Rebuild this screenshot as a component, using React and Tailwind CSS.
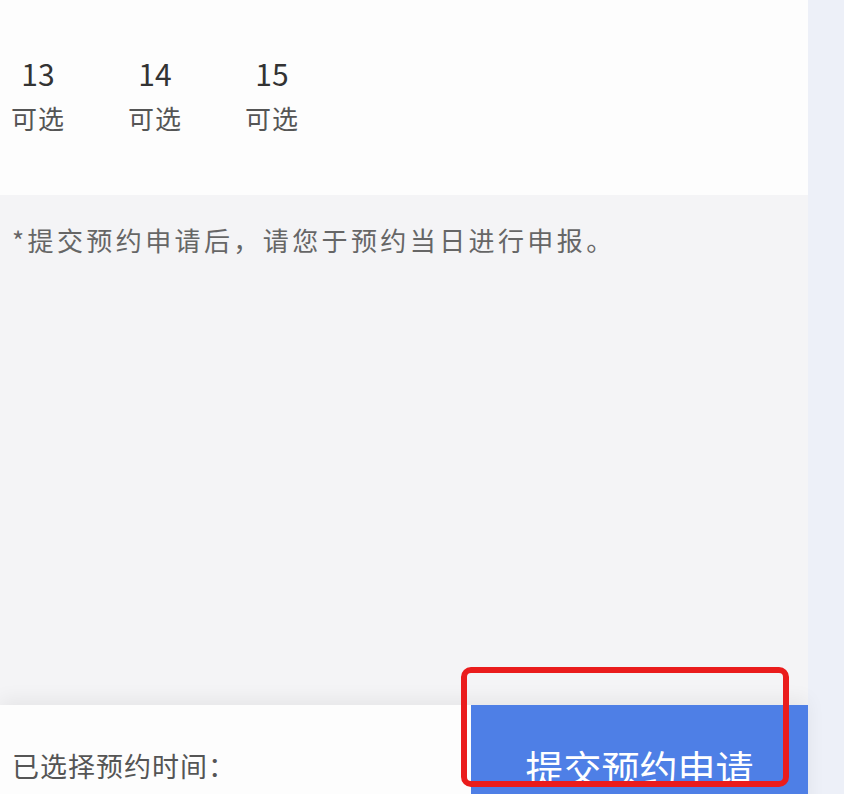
import React from "react";

const days = [
	{ day: "13", status: "可选" },
	{ day: "14", status: "可选" },
	{ day: "15", status: "可选" },
];

function App() {
	return (
		<div
			className="relative flex h-[794px] w-[844px] overflow-hidden bg-[#edf0f8]"
			style={{ fontFamily: '"Noto Sans CJK SC", "Noto Sans", sans-serif' }}
		>
			<div className="flex w-[808px] flex-col">
				{/* date picker row */}
				<div className="flex h-[195px] shrink-0 gap-[63px] bg-[#fdfdfd] pl-[11px] pt-[55px]">
					{days.map((d) => (
						<div key={d.day} className="flex w-[54px] flex-col items-center">
							<span className="text-[30px] leading-[36px] text-[#333]">
								{d.day}
							</span>
							<span className="mt-[10px] text-[26px] leading-[34px] tracking-[1px] text-[#555]">
								{d.status}
							</span>
						</div>
					))}
				</div>

				{/* notice */}
				<div className="h-[510px] shrink-0 bg-[#f4f4f6] pl-[12px] pt-[28px]">
					<p className="text-[26px] leading-[34px] tracking-[3.4px] text-[#666]">
						*提交预约申请后，请您于预约当日进行申报。
					</p>
				</div>

				{/* bottom bar */}
				<div className="flex h-[110px] shrink-0 items-start bg-[#fdfdfd] shadow-[0_-6px_18px_rgba(0,0,0,0.06)]">
					<div className="flex-1 pl-[12px] pt-[44px] text-[27px] leading-[34px] tracking-[1px] text-[#555]">
						已选择预约时间：
					</div>
					<div className="h-full w-[337px] bg-[#4e7fe6] pt-[38px] text-center text-[38px] leading-[48px] text-white">
						提交预约申请
					</div>
				</div>
			</div>

			{/* red annotation box */}
			<div className="absolute left-[461px] top-[667px] h-[120px] w-[328px] rounded-[10px] border-[6px] border-[#ea1c1c]" />
		</div>
	);
}

export default App;
